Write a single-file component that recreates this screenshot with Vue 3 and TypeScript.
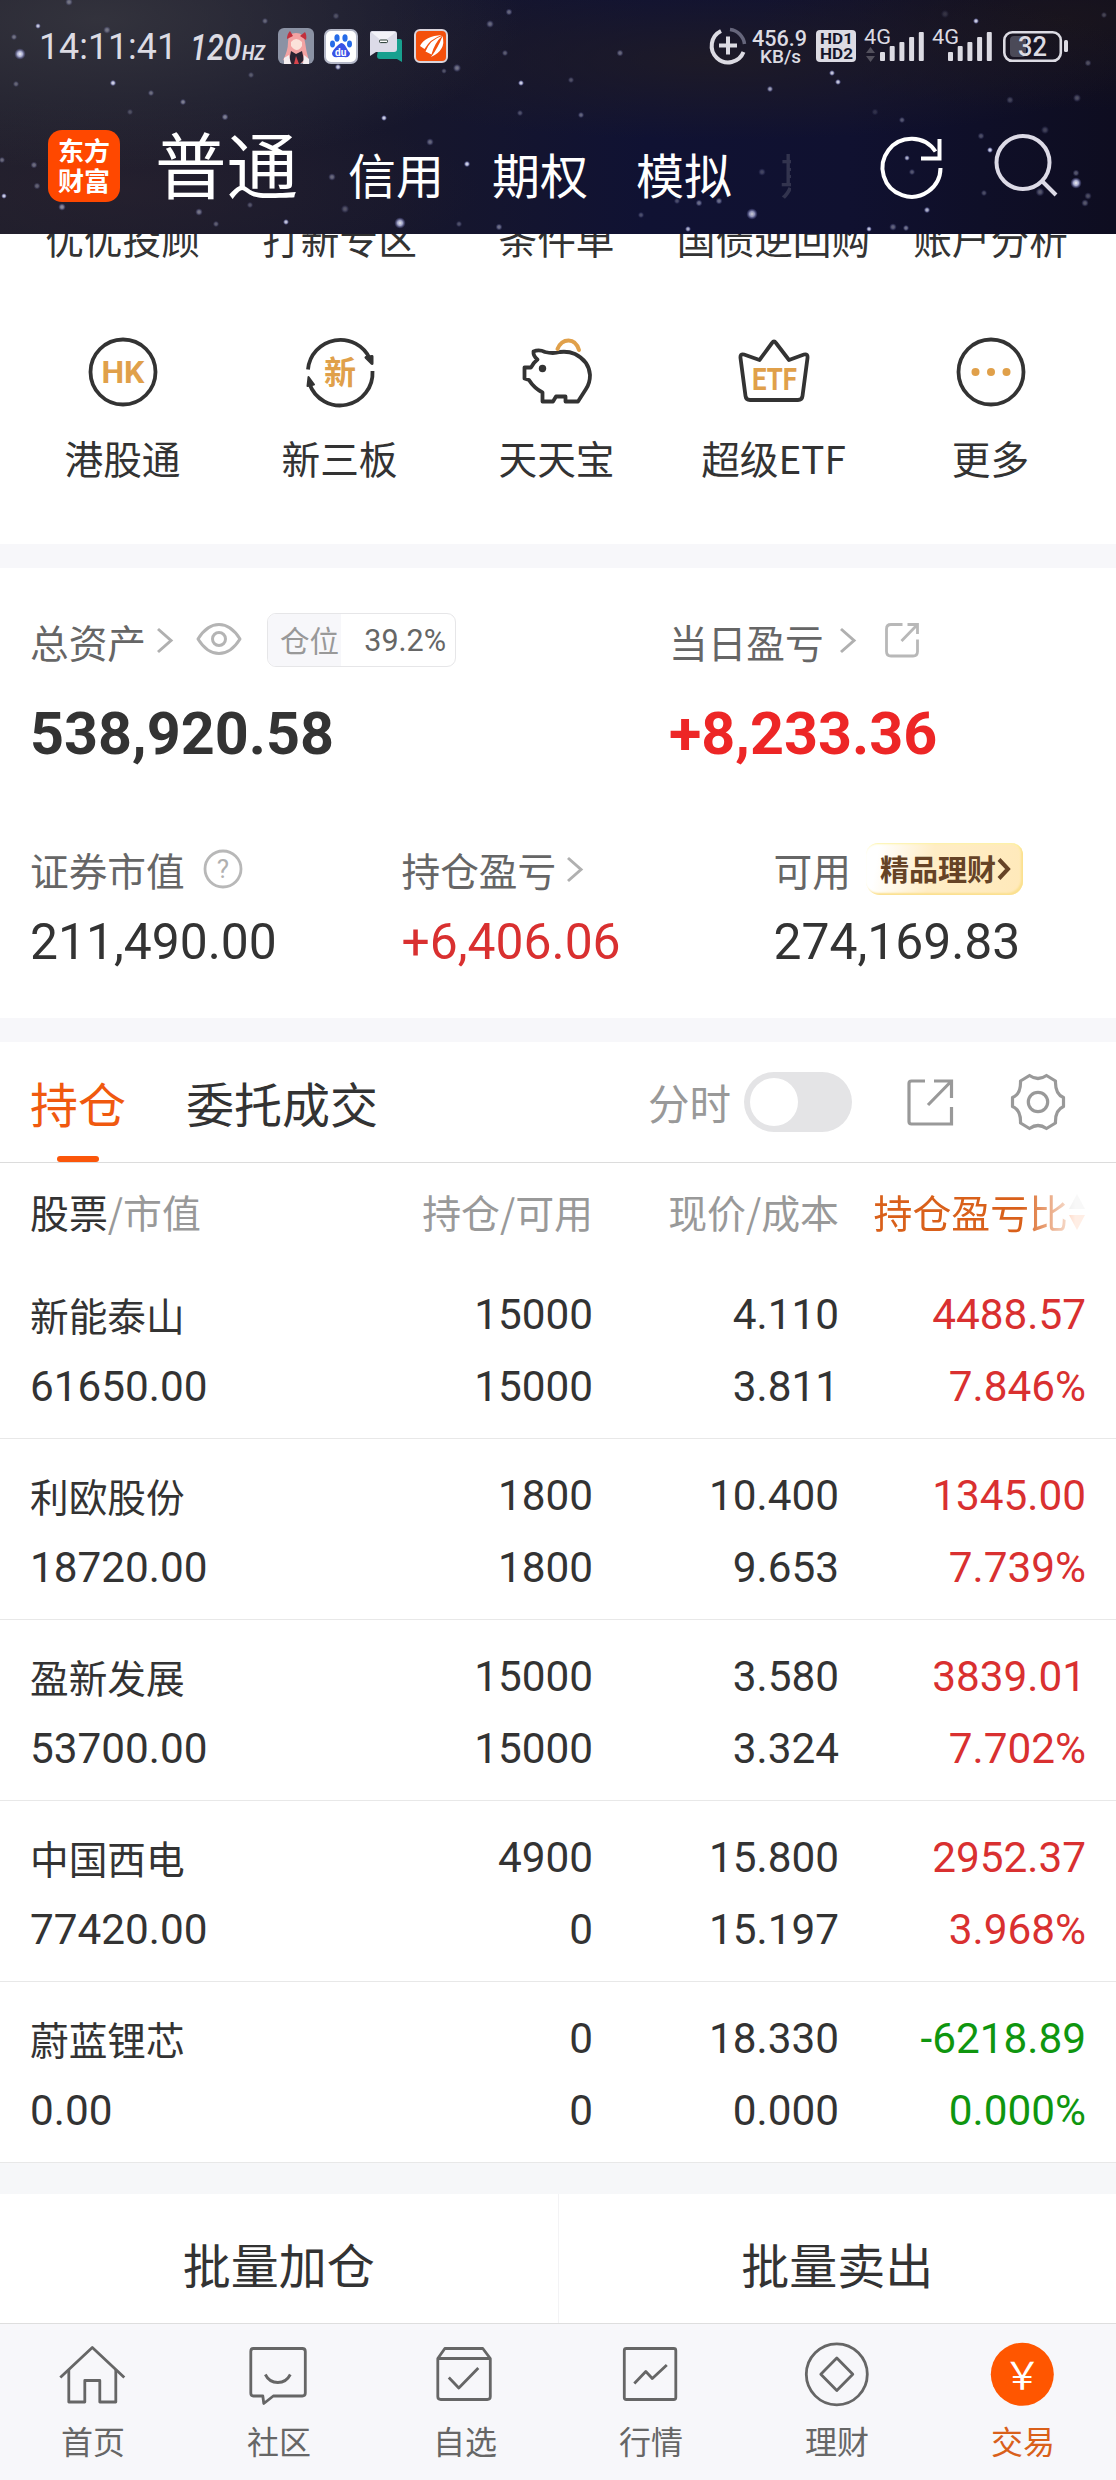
<script setup lang="ts">
interface Star { x: number; y: number; r: number; o: number }
interface Holding {
  name: string
  value: string
  amount: string
  available: string
  price: string
  cost: string
  profit: string
  ratio: string
  down?: boolean
}

const stars: Star[] = ([
  [38, 26, 1.8, 0.9], [20, 54, 3.6, 0.95], [113, 83, 2, 0.95], [183, 102, 2, 0.5], [151, 93, 2, 0.4],
  [225, 117, 2.2, 0.5], [384, 118, 1.9, 0.95], [338, 67, 2, 0.9], [521, 83, 1.9, 0.95], [490, 24, 2.5, 0.4],
  [457, 68, 2.6, 0.45], [430, 142, 2.4, 0.4], [467, 164, 2, 0.95], [332, 177, 2.4, 0.4], [286, 222, 1.9, 0.9],
  [400, 223, 3.6, 0.9], [199, 212, 2.4, 0.45], [62, 207, 2.4, 0.55], [4, 196, 1.8, 0.95], [34, 165, 2.2, 0.4],
  [37, 186, 2.2, 0.35], [107, 30, 2.4, 0.4], [69, 2, 2.4, 0.4], [14, 37, 2, 0.4], [265, 21, 2, 0.35],
  [130, 112, 2, 0.25], [509, 12, 2.2, 0.4], [336, 16, 2.2, 0.25], [16, 84, 2, 0.35], [251, 75, 2, 0.3],
  [345, 209, 2.6, 0.3], [250, 205, 2, 0.3], [216, 224, 2, 0.35], [505, 53, 2, 0.35], [2, 160, 2, 0.4],
  [499, 227, 2.2, 0.45], [459, 224, 2, 0.3], [520, 113, 2, 0.3], [444, 71, 1.8, 0.3], [620, 53, 2.2, 0.4],
  [571, 80, 2, 0.3], [581, 115, 2, 0.4], [770, 89, 2, 0.7], [832, 73, 1.9, 0.9], [838, 82, 1.9, 0.9],
  [976, 21, 1.9, 0.95], [752, 214, 3.6, 0.8], [688, 229, 1.9, 0.8], [699, 203, 2.2, 0.45], [719, 201, 2.2, 0.45],
  [677, 201, 2, 0.3], [869, 229, 1.8, 0.9], [927, 210, 2, 0.8], [990, 150, 1.9, 0.95], [907, 158, 1.8, 0.8],
  [912, 172, 2, 0.35], [902, 120, 2, 0.35], [1076, 183, 3.6, 0.95], [1076, 173, 2.2, 0.35], [1088, 63, 2.2, 0.3],
  [1077, 98, 2.6, 0.3], [1010, 100, 2.4, 0.25], [893, 227, 2.4, 0.4], [906, 228, 2, 0.5], [1040, 192, 2.8, 0.35],
  [1045, 130, 2.6, 0.25], [762, 172, 2.4, 0.25], [641, 215, 2, 0.3], [1085, 203, 2.4, 0.35], [1088, 196, 2.4, 0.3],
  [945, 14, 2.6, 0.15], [1104, 15, 2, 0.25], [981, 136, 2.2, 0.3], [984, 193, 2, 0.3], [875, 112, 2.2, 0.15],
] as number[][]).map(([x, y, r, o]) => ({ x, y, r, o }))

const topShortcuts = ['优优投顾', '打新专区', '条件单', '国债逆回购', '账户分析']
const shortcuts = [
  { id: 'hk', label: '港股通' },
  { id: 'neeq', label: '新三板' },
  { id: 'pig', label: '天天宝' },
  { id: 'etf', label: '超级ETF' },
  { id: 'more', label: '更多' },
]

const holdings: Holding[] = [
  { name: '新能泰山', value: '61650.00', amount: '15000', available: '15000', price: '4.110', cost: '3.811', profit: '4488.57', ratio: '7.846%' },
  { name: '利欧股份', value: '18720.00', amount: '1800', available: '1800', price: '10.400', cost: '9.653', profit: '1345.00', ratio: '7.739%' },
  { name: '盈新发展', value: '53700.00', amount: '15000', available: '15000', price: '3.580', cost: '3.324', profit: '3839.01', ratio: '7.702%' },
  { name: '中国西电', value: '77420.00', amount: '4900', available: '0', price: '15.800', cost: '15.197', profit: '2952.37', ratio: '3.968%' },
  { name: '蔚蓝锂芯', value: '0.00', amount: '0', available: '0', price: '18.330', cost: '0.000', profit: '-6218.89', ratio: '0.000%', down: true },
]

const tabs = [
  { id: 'home', label: '首页' },
  { id: 'community', label: '社区' },
  { id: 'watch', label: '自选' },
  { id: 'market', label: '行情' },
  { id: 'wealth', label: '理财' },
  { id: 'trade', label: '交易' },
]
const activeTab = 'trade'
const barHeights = [9, 15, 19, 24, 29]
</script>

<template>
  <div class="screen">
    <header class="header">
      <svg class="sky" viewBox="0 0 1116 234" width="1116" height="234">
        <defs>
          <radialGradient id="glow">
            <stop offset="0" stop-color="#fff" />
            <stop offset="0.45" stop-color="#c9cdf5" stop-opacity="0.85" />
            <stop offset="1" stop-color="#6d6fc4" stop-opacity="0" />
          </radialGradient>
        </defs>
        <circle v-for="(s, i) in stars" :key="i" :cx="s.x" :cy="s.y" :r="s.r * 1.6" :opacity="s.o" fill="url(#glow)" />
      </svg>

      <svg class="status" viewBox="0 0 1116 90" width="1116" height="90">
        <g fill="#dcdbe3" class="st">
          <text x="39" y="59" font-size="37" textLength="138" lengthAdjust="spacingAndGlyphs">14:11:41</text>
          <text x="190" y="60" font-size="37" font-style="italic" font-weight="500" textLength="51" lengthAdjust="spacingAndGlyphs">120</text>
          <text x="242" y="60" font-size="21" font-style="italic" font-weight="700" textLength="23" lengthAdjust="spacingAndGlyphs">HZ</text>
        </g>
        <!-- avatar -->
        <g>
          <rect x="278" y="28" width="36" height="36" rx="6" fill="#8b92a4" />
          <path d="M288 42q0-9 8-9t9 9q1 9 4 19l-7 2h-12l-7-3q5-9 5-18z" fill="#f3a3a3" />
          <path d="M287 39q0-5 3-8l3 5zM306 40q1-5-1-8l-5 4z" fill="#c22f3c" />
          <path d="M291 42q5-6 11 0v4q-5 8-11 0z" fill="#fbe2da" />
          <path d="M291 51l5 3 6-3 2 9-4 4h-8l-3-3z" fill="#2a2230" />
          <path d="M284 58l5-3 2 9h-7zM304 55l5 4v5h-6z" fill="#f4eef0" />
          <path d="M296 56l3 8h-5z" fill="#d8454d" />
        </g>
        <!-- paw -->
        <g>
          <rect x="325" y="30" width="32" height="33" rx="6" fill="#fff" stroke="#b4b8c8" stroke-width="2" />
          <ellipse cx="337" cy="38" rx="2.6" ry="3.7" fill="#256be8" />
          <ellipse cx="345" cy="38" rx="2.6" ry="3.7" fill="#256be8" />
          <ellipse cx="332.5" cy="44" rx="2.5" ry="3.4" fill="#256be8" />
          <ellipse cx="349.5" cy="44" rx="2.5" ry="3.4" fill="#256be8" />
          <path d="M341 43q3 0 5 4t4 6q0 5-6 4h-6q-6 1-6-4 1-3 4-6t5-4z" fill="#3a52e6" />
          <text x="335" y="56" font-size="10" font-weight="700" fill="#fff" class="st">du</text>
        </g>
        <!-- messages -->
        <g>
          <path d="M380 39h20q2 0 2 2v21l-5-3h-17q-3 0-3-3z" fill="#18a08f" />
          <path d="M372 31h22q3 0 3 3v15q0 3-3 3h-18l-6 4v-22q0-3 2-3z" fill="#dcdbe8" />
          <path d="M371 32l12 10 13-10z" fill="#f3f2f8" />
          <rect x="379.500" y="40" width="8" height="2.6" rx="1" fill="#fff" stroke="#22352f" />
        </g>
        <!-- broker -->
        <g>
          <rect x="415" y="30" width="32" height="32" rx="5" fill="#f4500c" stroke="#d9d4dc" stroke-width="2" />
          <g fill="#fff">
            <path d="M420 46Q425 36 442 35Q430 39 424.500 49Z" />
            <path d="M425.500 51.500Q430 39.500 442 36Q434.500 43 431.500 54.500Z" />
            <path d="M431 57Q438 48 442.500 36Q446.500 50 431 57Z" />
          </g>
        </g>
        <g fill="none" stroke="#dcdbe3" stroke-width="4">
          <path d="M721 31A16.500 16.500 0 1 0 743.500 52" />
          <path d="M730 29.500A16.500 16.500 0 0 1 744.500 44" stroke="#66667c" stroke-width="3.500" />
          <path d="M728 36.500v18M719 45.500h18" />
        </g>
        <g fill="#dcdbe3" class="st">
          <text x="752" y="46" font-size="21.500" font-weight="500" textLength="55" lengthAdjust="spacingAndGlyphs">456.9</text>
          <text x="760" y="63" font-size="18" font-weight="500" textLength="41" lengthAdjust="spacingAndGlyphs">KB/s</text>
          <rect x="816" y="30" width="40" height="32" rx="4" />
          <text x="864" y="44" font-size="21" textLength="27" lengthAdjust="spacingAndGlyphs">4G</text>
          <text x="932" y="44" font-size="21" textLength="27" lengthAdjust="spacingAndGlyphs">4G</text>
          <rect v-for="(h, i) in barHeights" :key="'a' + i" :x="880 + i * 9.7" :y="61 - h" width="5" :height="h" rx="1" />
          <rect v-for="(h, i) in barHeights" :key="'b' + i" :x="948 + i * 9.7" :y="61 - h" width="5" :height="h" rx="1" />
          <rect x="1064" y="40" width="4" height="12" rx="1.500" />
        </g>
        <g fill="#141428" class="st" font-weight="700">
          <text x="820" y="44" font-size="14.500" textLength="33" lengthAdjust="spacingAndGlyphs">HD1</text>
          <text x="820" y="58.500" font-size="14.500" textLength="33" lengthAdjust="spacingAndGlyphs">HD2</text>
        </g>
        <path d="M866 53l4.500-6 4.500 6zM866 56l4.500 6 4.500-6z" fill="#52505c" />
        <rect x="1010" y="36" width="16" height="21" rx="4" fill="#4b4a58" />
        <rect x="1004.300" y="32.300" width="56.500" height="28.500" rx="8" fill="none" stroke="#dcdbe3" stroke-width="2.600" />
        <text x="1018" y="55.500" font-size="27" font-weight="500" fill="#dcdbe3" class="st" textLength="29" lengthAdjust="spacingAndGlyphs">32</text>
      </svg>

      <div class="titlebar">
        <div class="logo"><span>东方</span><span>财富</span></div>
        <nav class="modes">
          <span class="mode current">普通</span>
          <span class="mode">信用</span>
          <span class="mode">期权</span>
          <span class="mode">模拟</span>
          <span class="mode fading">期</span>
        </nav>
        <svg class="act" viewBox="0 0 72 72" width="72" height="72" fill="none" stroke="#fff" stroke-width="4">
          <path d="M64.500 37A29 29 0 1 1 59.500 20.500" />
          <path d="M63.500 8v19.500H45" />
        </svg>
        <svg class="act search" viewBox="0 0 72 72" width="72" height="72" fill="none" stroke="#dcdae6" stroke-width="4">
          <circle cx="32" cy="32.500" r="26.500" />
          <path d="M51.500 51.500L65 65" />
        </svg>
      </div>
    </header>

    <section class="shortcuts">
      <div class="cols">
        <span v-for="s in topShortcuts" :key="s" class="sc-label">{{ s }}</span>
      </div>
      <div class="cols icons">
        <div v-for="s in shortcuts" :key="s.id" class="sc">
          <svg viewBox="0 0 80 80" width="80" height="80" fill="none" stroke="#333" stroke-width="3.800" stroke-linejoin="round">
            <template v-if="s.id === 'hk'">
              <circle cx="40" cy="40" r="32.500" />
              <text x="18.500" y="51" class="ic" font-size="31" textLength="43" lengthAdjust="spacingAndGlyphs">HK</text>
            </template>
            <template v-else-if="s.id === 'neeq'">
              <path d="M8 37.500A32.500 32.500 0 0 1 70 27" />
              <path d="M72.500 39A32.500 32.500 0 0 1 9.500 52" />
              <path d="M66 25.500l6-1v7z" stroke-width="3" fill="#333" />
              <path d="M14 52.500l-6.500 1.500 1-9z" stroke-width="2" fill="#333" />
              <text x="24" y="51.500" class="ic" font-size="32">新</text>
            </template>
            <template v-else-if="s.id === 'pig'">
              <path d="M43 20Q36 22 28 20Q22 17 16.500 19.500Q16 24 20.500 27.500Q16 31 14 35.500H7.500V46.500L12 48Q17 56 25.500 60.500V69.500H36L39 64.500H48.500V69.500H61L69 57Q73 51 73 43Q72 29 58 22Q51 19 43 20Z" />
              <circle cx="25.500" cy="36.500" r="3.700" fill="#333" stroke="none" />
              <path d="M40.500 17Q44 8.500 51.500 8.500T62 18" stroke="#e0a04a" stroke-width="4" stroke-linecap="round" />
            </template>
            <template v-else-if="s.id === 'etf'">
              <path d="M10 22.500L25.500 28L38 11Q40 8 42 11L55 28L70 22.500Q74 21.500 73.500 26L68.500 64Q68 68 64 68H16Q12 68 11.500 64L6.500 26Q6 21.500 10 22.500Z" />
              <text x="18" y="57.500" class="ic" font-size="32" textLength="45" lengthAdjust="spacingAndGlyphs">ETF</text>
            </template>
            <template v-else>
              <circle cx="40" cy="40" r="32.500" />
              <g fill="#e0a04a" stroke="none">
                <circle cx="24.500" cy="40" r="4" /><circle cx="40" cy="40" r="4" /><circle cx="55.500" cy="40" r="4" />
              </g>
            </template>
          </svg>
          <span class="sc-label">{{ s.label }}</span>
        </div>
      </div>
    </section>
    <div class="band"></div>

    <section class="assets">
      <div class="row-a">
        <div class="col-a">
          <div class="cap">
            <span class="lbl">总资产</span>
            <svg class="chev" viewBox="0 0 18 28" width="18" height="28"><path d="M2 3l13 11.500L2 26" /></svg>
            <svg class="eye" viewBox="0 0 48 34" width="48" height="34" fill="none" stroke="#b4b4b4" stroke-width="3">
              <path d="M3 17Q12 2.500 24 2.500T45 17Q36 31.500 24 31.500T3 17Z" stroke-linejoin="round" />
              <circle cx="24" cy="17" r="6.500" />
            </svg>
            <div class="position"><span class="pos-k">仓位</span><span class="pos-v">39.2%</span></div>
          </div>
          <div class="big">538,920.58</div>
        </div>
        <div class="col-a">
          <div class="cap">
            <span class="lbl">当日盈亏</span>
            <svg class="chev wide" viewBox="0 0 18 28" width="18" height="28"><path d="M2 3l13 11.500L2 26" /></svg>
            <svg class="share" viewBox="0 0 38 38" width="38" height="38" fill="none" stroke="#b8b8b8" stroke-width="2.800">
              <path d="M19.500 3.500H8Q3.500 3.500 3.500 8V30.500Q3.500 35 8 35H30Q34.500 35 34.500 30.500V18.500" />
              <path d="M24.500 3.500H34.500V13M34 4L18.500 20" />
            </svg>
          </div>
          <div class="big red">+8,233.36</div>
        </div>
      </div>
      <div class="row-b">
        <div>
          <div class="cap">
            <span class="lbl">证券市值</span>
            <svg class="help" viewBox="0 0 40 40" width="40" height="40">
              <circle cx="20" cy="20" r="18" fill="none" stroke="#b8b8b8" stroke-width="2.800" />
              <text x="20" y="29" text-anchor="middle" font-size="26" fill="#b0b0b0" class="q">?</text>
            </svg>
          </div>
          <div class="mid">211,490.00</div>
        </div>
        <div>
          <div class="cap">
            <span class="lbl">持仓盈亏</span>
            <svg class="chev near" viewBox="0 0 18 28" width="18" height="28"><path d="M2 3l13 11.500L2 26" /></svg>
          </div>
          <div class="mid red2">+6,406.06</div>
        </div>
        <div>
          <div class="cap">
            <span class="lbl">可用</span>
            <div class="promo">
              <span>精品理财</span>
              <svg viewBox="0 0 14 24" width="14" height="24" fill="none" stroke="#664326" stroke-width="4"><path d="M2 2.500l9 9.500-9 9.500" /></svg>
            </div>
          </div>
          <div class="mid">274,169.83</div>
        </div>
      </div>
    </section>
    <div class="band"></div>

    <section class="tabs">
      <span class="tab on">持仓</span>
      <span class="tab">委托成交</span>
      <span class="spacer"></span>
      <span class="minute">分时</span>
      <span class="toggle"><i></i></span>
      <svg class="t-share" viewBox="0 0 50 50" width="50" height="50" fill="none" stroke="#999" stroke-width="3.200">
        <path d="M20 4H6.500Q4 4 4 6.500V44.500Q4 47 6.500 47H46.500V30" />
        <path d="M29 4H46.500V21M46 4.500L23 28" />
      </svg>
      <svg class="t-gear" viewBox="-30 -30 60 60" width="60" height="60" fill="none" stroke="#999" stroke-width="3.200" stroke-linejoin="round">
        <path d="M-8.500 -26.500Q0 -20.500 8.500 -26.500L17.500 -21Q17 -8 25.500 -4.500V4.500Q17 8 17.500 21L8.500 26.500Q0 20.500 -8.500 26.500L-17.500 21Q-17 8 -25.500 4.500V-4.500Q-17 -8 -17.500 -21Z" />
        <circle r="9.700" />
      </svg>
    </section>

    <section class="table">
      <div class="thead">
        <span class="c1"><b>股票</b>/市值</span>
        <span class="c2">持仓/可用</span>
        <span class="c3">现价/成本</span>
        <span class="c4">
          持仓盈亏比
          <svg viewBox="0 0 16 36" width="16" height="36"><path d="M0 15L8 0l8 15z" fill="#bbb" /><path d="M0 21h16L8 36z" fill="#f50" /></svg>
        </span>
      </div>
      <div v-for="h in holdings" :key="h.name" class="trow" :class="{ down: h.down }">
        <div class="c1"><span class="name">{{ h.name }}</span><span>{{ h.value }}</span></div>
        <div class="c2"><span>{{ h.amount }}</span><span>{{ h.available }}</span></div>
        <div class="c3"><span>{{ h.price }}</span><span>{{ h.cost }}</span></div>
        <div class="c4"><span>{{ h.profit }}</span><span>{{ h.ratio }}</span></div>
      </div>
    </section>

    <div class="band tall"></div>
    <section class="batch">
      <button type="button">批量加仓</button>
      <button type="button">批量卖出</button>
    </section>

    <footer class="nav">
      <div v-for="t in tabs" :key="t.id" class="nav-item" :class="{ active: t.id === activeTab }">
        <svg viewBox="0.7 0 72 72" width="72" height="72" fill="none" stroke="#666" stroke-width="2.800" stroke-linejoin="round">
          <template v-if="t.id === 'home'">
            <path d="M12.500 31V63H28.500V41.500H43.500V63H59.500V31" /><path d="M4 38.500L36 8.500 68 38.500" />
          </template>
          <template v-else-if="t.id === 'community'">
            <path d="M11 9.500H60Q63 9.500 63 12.500V54Q63 57 60 57H31L21.500 64.500 20.500 57H11Q8.500 57 8.500 54V12.500Q8.500 9.500 11 9.500Z" />
            <path d="M23 35.500Q27 43.500 35.500 43.500T48 35.500" />
          </template>
          <template v-else-if="t.id === 'watch'">
            <path d="M9.500 19.500L16.500 9.500H54.500L62 19.500V57.500Q62 60.500 59 60.500H12.500Q9.500 60.500 9.500 57.500ZM9.500 19.500H62" />
            <path d="M20.500 38.500L30.500 49 50 29" />
          </template>
          <template v-else-if="t.id === 'market'">
            <rect x="10" y="9.500" width="51.500" height="51" rx="2" /><path d="M20 44.500L31.500 32.500 38 39.500 52.500 26" />
          </template>
          <template v-else-if="t.id === 'wealth'">
            <circle cx="36.500" cy="35.300" r="30.500" /><path d="M36.500 19L52.500 35.300 36.500 51.500 20.500 35.300Z" />
          </template>
          <template v-else>
            <circle cx="36" cy="35.300" r="31.500" fill="#ff5600" stroke="none" />
            <text x="36" y="50" text-anchor="middle" class="yen">￥</text>
          </template>
        </svg>
        <span>{{ t.label }}</span>
      </div>
    </footer>
  </div>
</template>

<style>
body { margin: 0; background: #fff; }
</style>

<style scoped>
.screen { width: 1116px; height: 2480px; display: flex; flex-direction: column; overflow: hidden; background: #fff; color: #333; font-family: Roboto, "Noto Sans CJK SC", sans-serif; }
.screen > * { flex: none; box-sizing: border-box; }
.header { position: relative; z-index: 1; height: 234px; overflow: hidden;
  background:
    radial-gradient(ellipse 420px 150px at 100px 20px, rgba(58, 58, 66, .75), transparent),
    radial-gradient(ellipse 420px 80px at 720px 60px, rgba(32, 28, 38, .85), transparent),
    radial-gradient(ellipse 360px 90px at 120px 190px, rgba(44, 36, 48, .5), transparent),
    radial-gradient(ellipse 300px 90px at 1060px 20px, rgba(28, 22, 28, .8), transparent),
    linear-gradient(90deg, #1f1e2c 0, #17172c 35%, #101233 58%, #101130 76%, #0e0d20 100%); }
.sky { position: absolute; inset: 0; }
.status { display: block; position: relative; }
.st { font-family: Roboto, sans-serif; }
.titlebar { position: relative; display: flex; height: 144px; padding-left: 48px; }
.logo { width: 72px; height: 72px; margin-top: 40px; box-sizing: border-box; padding-top: 5px; border-radius: 14px; background: #ff4800; color: #fff; font: 700 26px/30px "Noto Sans CJK SC", sans-serif; display: flex; flex-direction: column; align-items: center; }
.modes { display: flex; width: 706px; margin-left: 37px; }
.mode { font: 400 48px/60px "Noto Sans CJK SC", sans-serif; color: #fff; margin-top: 53px; width: 96px; margin-right: 48px; flex: none; }
.mode.current { font-size: 71.5px; line-height: 80px; width: 143px; margin: 32px 50px 0 -2px; }
.mode.fading { width: 11px; margin-right: 0; overflow: hidden; white-space: nowrap; opacity: .14; height: 60px; }
.act { margin-top: 41px; margin-left: 13px; }
.search { margin-left: 43px; margin-top: 40px; }

.shortcuts { height: 310px; padding: 0 17px 0 14px; }
.cols { display: grid; grid-template-columns: repeat(5, 1fr); margin-top: -22px; }
.icons { margin-top: 70px; }
.sc { display: flex; flex-direction: column; align-items: center; gap: 20px; }
.sc-label { font: 400 38.7px/50px "Noto Sans CJK SC", sans-serif; text-align: center; white-space: nowrap; }
.ic { font-family: Roboto, "Noto Sans CJK SC", sans-serif; font-weight: 700; fill: #e0a04a; stroke: none; }
.band { height: 24px; background: #f7f7fa; }

.assets { height: 450px; padding: 45px 0 0 30px; }
.row-a { display: grid; grid-template-columns: 639px auto; }
.row-b { display: grid; grid-template-columns: 371.5px 372px auto; margin-top: 74px; }
.cap { display: flex; align-items: center; height: 52px; }
.row-a .cap { height: 54px; }
.lbl { font: 400 38.7px/52px "Noto Sans CJK SC", sans-serif; color: #666; }
.row-a .lbl { padding-top: 2px; }
.chev { fill: none; stroke: #b0b0b0; stroke-width: 3; margin-left: 10px; }
.chev.wide { margin-left: 15px; }
.chev.near { margin-left: 10px; }
.eye { margin-left: 21px; margin-top: -2px; }
.position { display: flex; box-sizing: border-box; width: 189px; height: 54px; margin-left: 24px; border: 1.5px solid #e6e6e8; border-radius: 9px; overflow: hidden; line-height: 52px; }
.pos-k { width: 73px; background: #f7f7fa; color: #999; font: 400 29.5px/50px "Noto Sans CJK SC", sans-serif; padding-left: 12px; box-sizing: border-box; white-space: nowrap; }
.pos-v { flex: 1; color: #666; font-size: 30.5px; text-align: right; padding-right: 9px; line-height: 53px; }
.big { font-size: 59.3px; font-weight: 700; line-height: 70px; margin-top: 32px; }
.red { color: #ed2626; }
.share { margin-left: 26px; }
.help { margin-left: 18px; }
.q { font-family: Roboto, sans-serif; }
.mid { font-size: 49.8px; line-height: 60px; margin-top: 17px; }
.red2 { color: #d93030; }
.promo { display: flex; align-items: center; box-sizing: border-box; width: 157px; height: 52px; margin-left: 15px; padding-left: 14px; border-radius: 12px 12px 14px 14px; background: linear-gradient(100deg, #fff 8%, #ffedc6 42%, #ffe9ba); box-shadow: inset -2px -2px 2px #fbe08f, inset -1px 1px 2px #fdf3a4; }
.promo span { font: 700 29px/48px "Noto Sans CJK SC", sans-serif; color: #664326; white-space: nowrap; margin-top: -2px; }
.promo svg { margin-left: 1px; }

.tabs { display: flex; align-items: center; height: 121px; border-bottom: 1px solid #dcdcdc; padding-left: 30px; }
.tab { font: 400 48px/120px "Noto Sans CJK SC", sans-serif; margin-right: 60px; position: relative; }
.tab.on { color: #f0590f; }
.tab.on::after { content: ""; position: absolute; left: 27px; bottom: 0; width: 42px; height: 6px; border-radius: 3px; background: #fb560a; }
.spacer { flex: 1; }
.minute { font: 400 41.500px/60px "Noto Sans CJK SC", sans-serif; color: #999; }
.toggle { width: 108px; height: 60px; border-radius: 30px; background: #e4e4e6; margin-left: 13px; display: flex; align-items: center; }
.toggle i { width: 48px; height: 48px; border-radius: 50%; background: #fff; margin-left: 6px; }
.t-share { margin-left: 53px; margin-top: -1px; }
.t-gear { margin: 0 48px 0 53px; }

.thead { display: flex; height: 95px; padding: 2px 31px 0 30px; box-sizing: border-box; font: 400 38.9px/93px "Noto Sans CJK SC", sans-serif; color: #999; }
.thead b { font-weight: 400; color: #333; }
.c1 { width: 300px; }
.c2 { width: 263px; text-align: right; }
.c3 { width: 246px; text-align: right; }
.c4 { flex: 1; text-align: right; }
.thead .c4 { display: flex; align-items: center; justify-content: flex-end; color: #d9601a; gap: 1px; white-space: nowrap; -webkit-mask-image: linear-gradient(90deg, #000 74%, rgba(0, 0, 0, .1) 96%); mask-image: linear-gradient(90deg, #000 74%, rgba(0, 0, 0, .1) 96%); }
.trow { display: flex; height: 181px; box-sizing: border-box; padding: 21px 30px 0 30px; border-bottom: 1px solid #e8e8e8; font-size: 42.3px; line-height: 72px; }
.trow span { display: block; }
.trow .name { font: 400 38.7px/70px "Noto Sans CJK SC", sans-serif; height: 72px; }
.trow .c4 { color: #d93030; }
.trow.down .c4 { color: #0f960f; }

.band.tall { height: 31px; background: #f6f7f9; }
.batch { display: flex; height: 129px; }
.batch button { flex: 1; border: 0; padding: 9px 0 0; background: #fff; color: #333; font: 400 48px/60px "Noto Sans CJK SC", sans-serif; }
.batch button + button { border-left: 1px solid #f3f3f5; }
.nav { display: grid; grid-template-columns: repeat(6, 186px); height: 157px; border-top: 1px solid #dedede; background: #f7f7fa; padding-top: 15px; }
.nav-item { display: flex; flex-direction: column; align-items: center; font: 400 32px/40px "Noto Sans CJK SC", sans-serif; color: #666; gap: 9px; }
.nav-item.active { color: #d9601a; }
.yen { font: 400 38px "Noto Sans CJK SC", sans-serif; fill: #fff; stroke: none; }
</style>
